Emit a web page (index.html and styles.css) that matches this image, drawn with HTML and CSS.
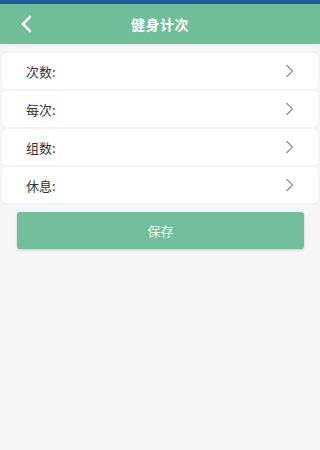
FILE: index.html
```html
<!DOCTYPE html>
<html lang="zh">
<head>
<meta charset="utf-8">
<link rel="stylesheet" href="styles.css">
</head>
<body>
<div class="status"></div>
<header class="header">
  <span class="back">
    <svg width="14" height="18" viewBox="0 0 14 18"><path d="M11 2 L4 9 L11 16" fill="none" stroke="#fff" stroke-width="2.6" stroke-linecap="round" stroke-linejoin="round"/></svg>
  </span>
  <h1 class="title">健身计次</h1>
</header>
<main class="list">
  <div class="row"><span class="label">次数:</span><svg class="chev" width="9" height="14" viewBox="0 0 9 14"><path d="M1.5 1 L7.5 7 L1.5 13" fill="none" stroke="#8c8c8c" stroke-width="1.1"/></svg></div>
  <div class="row"><span class="label">每次:</span><svg class="chev" width="9" height="14" viewBox="0 0 9 14"><path d="M1.5 1 L7.5 7 L1.5 13" fill="none" stroke="#8c8c8c" stroke-width="1.1"/></svg></div>
  <div class="row"><span class="label">组数:</span><svg class="chev" width="9" height="14" viewBox="0 0 9 14"><path d="M1.5 1 L7.5 7 L1.5 13" fill="none" stroke="#8c8c8c" stroke-width="1.1"/></svg></div>
  <div class="row"><span class="label">休息:</span><svg class="chev" width="9" height="14" viewBox="0 0 9 14"><path d="M1.5 1 L7.5 7 L1.5 13" fill="none" stroke="#8c8c8c" stroke-width="1.1"/></svg></div>
</main>
<div class="actions"><button class="save">保存</button></div>
</body>
</html>
```
FILE: styles.css
```css
html, body {
  margin: 0;
  padding: 0;
  background: #f6f6f6;
  font-family: "Noto Sans CJK SC", "Noto Sans", sans-serif;
}
body {
  min-height: 450px;
}
.status {
  height: 4px;
  background: #1d5c98;
}
.header {
  height: 40px;
  background: #70bd99;
  display: flex;
  align-items: center;
  justify-content: center;
  position: relative;
  box-shadow: 0 1px 3px rgba(0,0,0,0.06);
}
.back {
  position: absolute;
  left: 19px;
  top: 11px;
  display: flex;
}
.title {
  margin: 0;
  color: #fff;
  font-size: 14px;
  font-weight: bold;
  letter-spacing: 0.5px;
}
.list {
  display: flex;
  flex-direction: column;
  gap: 2px;
  padding: 9px 2px 0;
}
.row {
  height: 36px;
  background: #fff;
  border-radius: 4px;
  box-shadow: 0 0 1px rgba(0,0,0,0.12);
  display: flex;
  align-items: center;
  justify-content: space-between;
  padding: 0 24px 0 24px;
}
.label {
  font-size: 13px;
  color: #333;
}
.chev {
  display: block;
}
.actions {
  padding: 9px 16px 0 17px;
}
.save {
  display: block;
  width: 100%;
  height: 37px;
  border: 0;
  border-radius: 3px;
  background: #72bd9b;
  color: #eef8f3;
  font-family: "Noto Sans CJK SC", "Noto Sans", sans-serif;
  font-size: 13px;
  box-shadow: 0 1px 3px rgba(0,0,0,0.18);
}
```
